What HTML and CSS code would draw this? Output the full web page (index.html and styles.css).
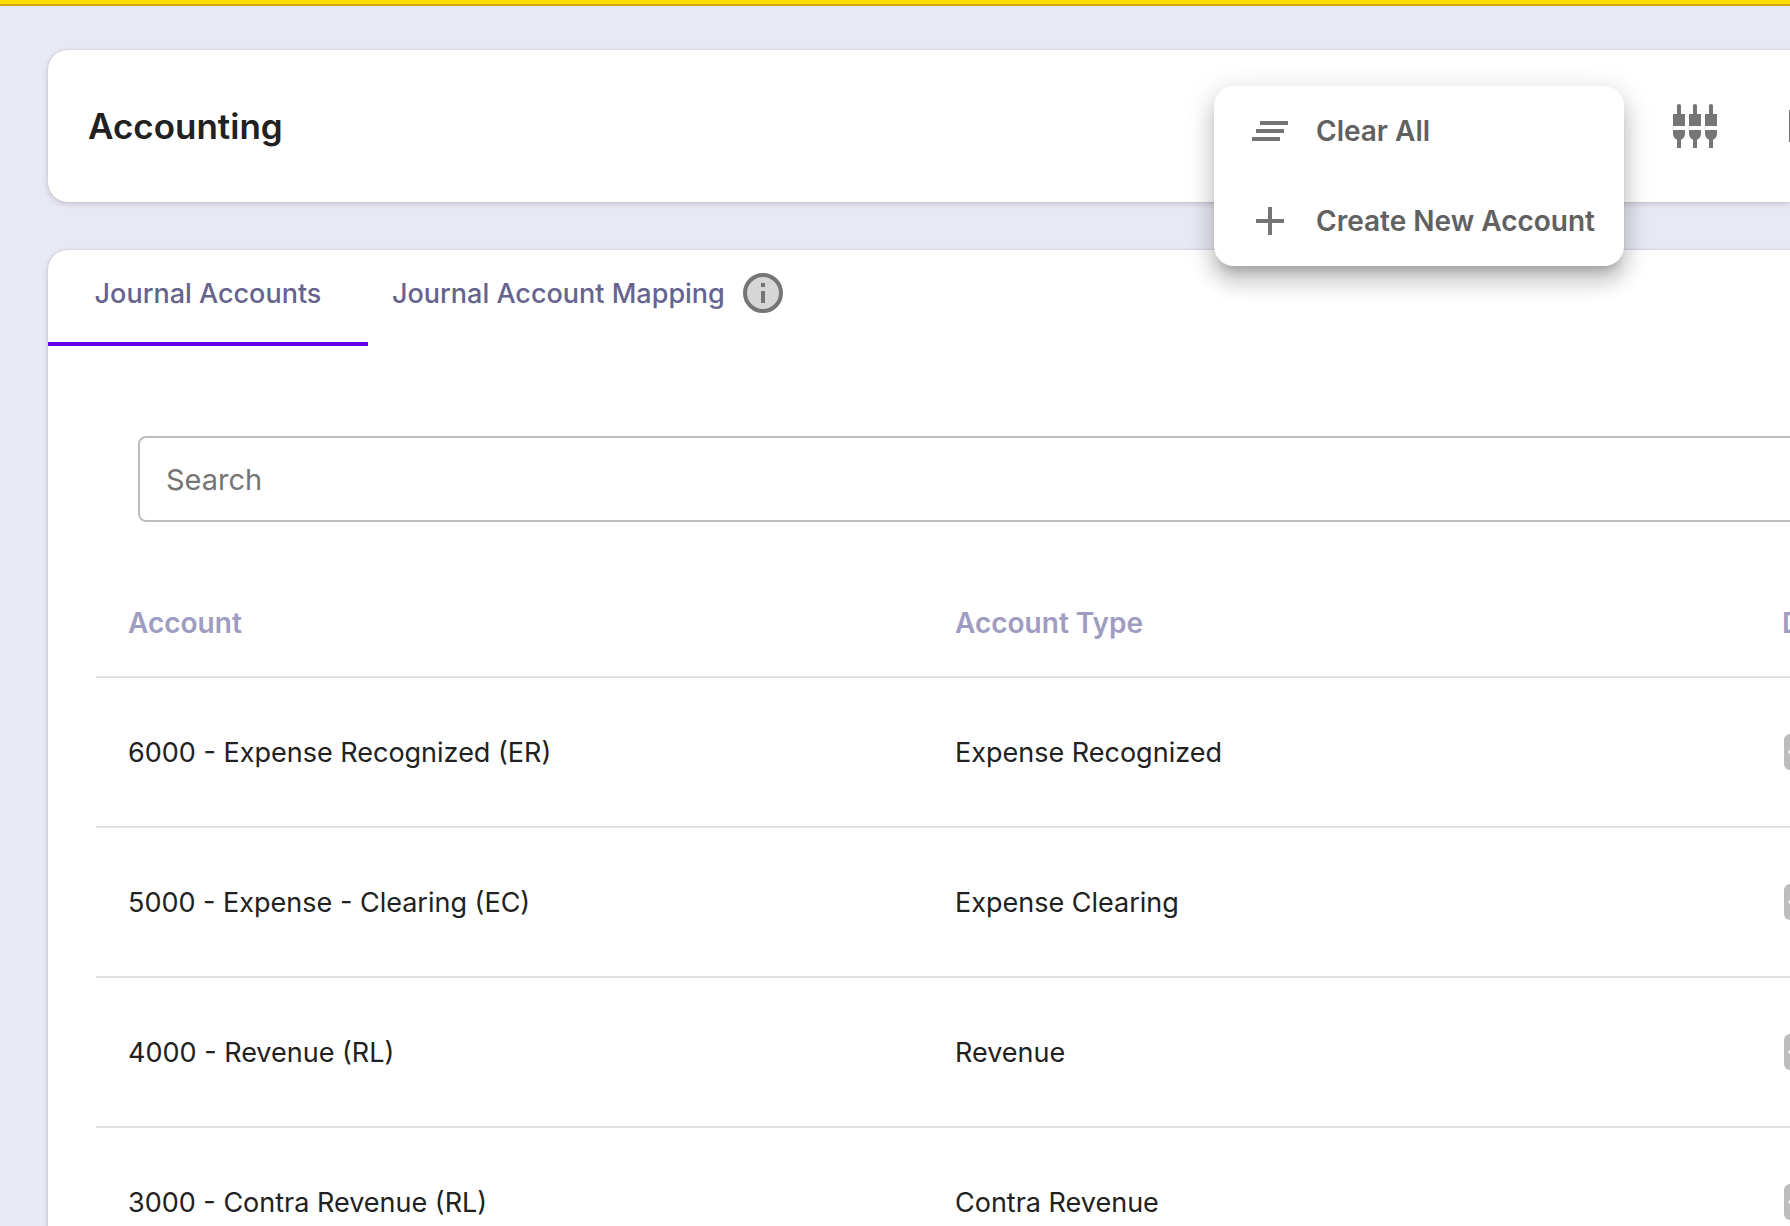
FILE: index.html
```html
<!DOCTYPE html>
<html lang="en">

<head>
  <meta charset="utf-8">
  <title>Accounting</title>
  <meta name="viewport" content="width=device-width, initial-scale=1">
  <link rel="stylesheet" href="styles.css">
</head>

<body>
  <svg width="0" height="0" class="defs">
    <symbol id="badge" viewBox="0 0 56 36">
      <rect width="56" height="36" rx="6" fill="#bdbdbd" />
      <path d="M4 18l8-8v5h32v-5l8 8-8 8v-5H12v5z" fill="white" />
    </symbol>
  </svg>
  <div class="top-bar"></div>
  <div class="page">
    <header class="card header">
      <h1>Accounting</h1>
      <div class="actions">
        <button class="icon-btn" type="button" aria-label="Columns">
          <svg class="icon" viewBox="0 0 24 24">
            <path d="M5 2c0-.55-.45-1-1-1s-1 .45-1 1v4H1v6h6V6H5V2zm4 14c0 1.3.84 2.4 2 2.82V23h2v-4.180c1.160-.41 2-1.510 2-2.820v-2H9v2zm-8 0c0 1.300.84 2.400 2 2.820V23h2v-4.180C6.160 18.400 7 17.300 7 16v-2H1v2zM21 6V2c0-.55-.45-1-1-1s-1 .45-1 1v4h-2v6h6V6h-2zm-8-4c0-.55-.45-1-1-1s-1 .45-1 1v4H9v6h6V6h-2V2zm4 14c0 1.300.84 2.400 2 2.820V23h2v-4.180c1.160-.41 2-1.510 2-2.820v-2h-6v2z" />
          </svg>
        </button>
        <button class="icon-btn" type="button" aria-label="More">
          <svg class="icon" viewBox="0 0 24 24">
            <path d="M3 4h18v16H3z" />
          </svg>
        </button>
      </div>
      <div class="menu" role="menu">
        <button type="button" role="menuitem">
          <svg class="icon" viewBox="0 0 24 24">
            <path d="M5 13h14v-2H5v2zm-2 4h14v-2H3v2zM7 7v2h14V7H7z" />
          </svg>
          Clear All
        </button>
        <button type="button" role="menuitem">
          <svg class="icon" viewBox="0 0 24 24">
            <path d="M19 13h-6v6h-2v-6H5v-2h6V5h2v6h6v2z" />
          </svg>
          Create New Account
        </button>
      </div>
    </header>

    <main class="card">
      <nav class="tabs">
        <button class="tab active" type="button">Journal Accounts</button>
        <button class="tab" type="button">
          Journal Account Mapping
          <svg class="icon" viewBox="0 0 24 24">
            <circle class="info-fill" cx="12" cy="12" r="9" />
            <path d="M11 7h2v2h-2zM11 11h2v6h-2z" />
          </svg>
        </button>
      </nav>

      <div class="content">
        <div class="search">
          <input type="text" placeholder="Search" aria-label="Search">
        </div>

        <table>
          <thead>
            <tr>
              <th>Account</th>
              <th>Account Type</th>
              <th>D</th>
            </tr>
          </thead>
          <tbody>
            <tr>
              <td>6000 - Expense Recognized (ER)</td>
              <td>Expense Recognized</td>
              <td><svg class="badge"><use href="#badge" /></svg></td>
            </tr>
            <tr>
              <td>5000 - Expense - Clearing (EC)</td>
              <td>Expense Clearing</td>
              <td><svg class="badge"><use href="#badge" /></svg></td>
            </tr>
            <tr>
              <td>4000 - Revenue (RL)</td>
              <td>Revenue</td>
              <td><svg class="badge"><use href="#badge" /></svg></td>
            </tr>
            <tr>
              <td>3000 - Contra Revenue (RL)</td>
              <td>Contra Revenue</td>
              <td><svg class="badge"><use href="#badge" /></svg></td>
            </tr>
          </tbody>
        </table>
      </div>
    </main>
  </div>
</body>

</html>
```

FILE: styles.css
```css
* {
  box-sizing: border-box;
}

body {
  margin: 0;
  height: 100vh;
  overflow: hidden;
  background: #e9e9f3;
  color: #212121;
  font-family: Inter, "Liberation Sans", sans-serif;
  font-size: 27px;
}

button, input {
  font: inherit;
}

button {
  border: 0;
  background: none;
  cursor: pointer;
}

.defs {
  display: block;
}

.top-bar {
  height: 6px;
  background: #ffdd00;
  border-bottom: 2px solid #d0a810;
}

.page {
  display: flex;
  flex-direction: column;
  gap: 48px;
  padding: 44px 0 0 48px;
}

/* cards run off the right edge */
.card {
  background: white;
  border-radius: 20px 0 0 20px;
  box-shadow: 0 2px 6px rgba(20, 20, 50, .16), 0 0 2px rgba(20, 20, 60, .14);
}

.icon {
  width: 48px;
  height: 48px;
  flex: none;
  fill: #757575;
}

.header {
  position: relative;
  display: flex;
  align-items: center;
  justify-content: space-between;
  height: 152px;
  padding-left: 40px;
}

h1 {
  margin: 0;
  font-size: 35px;
  font-weight: 600;
}

.actions {
  display: flex;
  gap: 64px;
  margin-right: -41px;
}

.icon-btn {
  display: flex;
  padding: 0;
}

.menu {
  position: absolute;
  top: 36px;
  right: 166px;
  width: 410px;
  background: white;
  border-radius: 20px;
  box-shadow: 0 10px 10px -6px rgba(0, 0, 0, .2), 0 16px 20px 2px rgba(0, 0, 0, .14), 0 6px 28px 4px rgba(0, 0, 0, .12);
}

.menu button {
  display: flex;
  align-items: center;
  gap: 22px;
  width: 100%;
  height: 90px;
  padding: 0 28px 0 32px;
  color: #616161;
  font-size: 28px;
  font-weight: 600;
  white-space: nowrap;
}

.tabs {
  display: flex;
}

.tab {
  display: flex;
  align-items: center;
  justify-content: center;
  gap: 14px;
  height: 96px;
  padding: 0 24px 6px;
  border-bottom: 4px solid transparent;
  color: #66638f;
  font-weight: 500;
}

.tab.active {
  min-width: 320px;
  border-color: #6200ee;
}

.info-fill {
  fill: #d6d6d6;
  stroke: #757575;
  stroke-width: 2;
}

.content {
  padding: 90px 0 0 48px;
  overflow: hidden;
}

.search {
  padding-left: 42px;
}

.search input {
  display: block;
  width: calc(100% + 20px);
  height: 86px;
  padding: 0 26px;
  border: 2px solid #bdbdbd;
  border-radius: 8px;
  font-size: 29px;
}

.search input::placeholder {
  color: #757575;
}

table {
  width: calc(100% + 787px);
  margin-top: 48px;
  border-collapse: separate;
  border-spacing: 0;
  table-layout: fixed;
}

th, td {
  padding: 0 32px;
  border-bottom: 2px solid #e0e0e0;
  text-align: left;
}

th {
  height: 108px;
  color: #9f9cc2;
  font-size: 28px;
  font-weight: 600;
}

td {
  height: 150px;
}

.badge {
  display: block;
  width: 56px;
  height: 36px;
  margin-left: 2px;
}
```
